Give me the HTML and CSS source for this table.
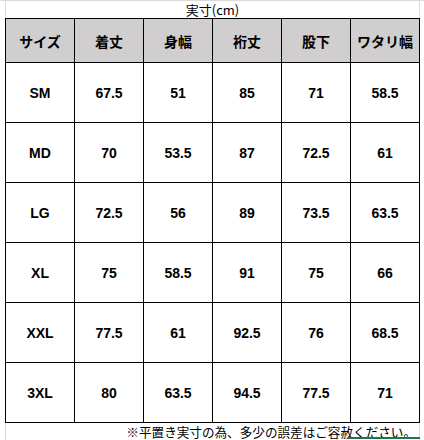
FILE: index.html
```html
<!DOCTYPE html>
<html lang="ja">
<head>
<meta charset="utf-8">
<link rel="stylesheet" href="styles.css">
</head>
<body>
<div class="sheet">
  <div class="title">実寸(cm)</div>
  <div class="table">
    <div class="cell head">サイズ</div>
    <div class="cell head">着丈</div>
    <div class="cell head">身幅</div>
    <div class="cell head">裄丈</div>
    <div class="cell head">股下</div>
    <div class="cell head">ワタリ幅</div>

    <div class="cell">SM</div><div class="cell">67.5</div><div class="cell">51</div><div class="cell">85</div><div class="cell">71</div><div class="cell">58.5</div>
    <div class="cell">MD</div><div class="cell">70</div><div class="cell">53.5</div><div class="cell">87</div><div class="cell">72.5</div><div class="cell">61</div>
    <div class="cell">LG</div><div class="cell">72.5</div><div class="cell">56</div><div class="cell">89</div><div class="cell">73.5</div><div class="cell">63.5</div>
    <div class="cell">XL</div><div class="cell">75</div><div class="cell">58.5</div><div class="cell">91</div><div class="cell">75</div><div class="cell">66</div>
    <div class="cell">XXL</div><div class="cell">77.5</div><div class="cell">61</div><div class="cell">92.5</div><div class="cell">76</div><div class="cell">68.5</div>
    <div class="cell">3XL</div><div class="cell">80</div><div class="cell">63.5</div><div class="cell">94.5</div><div class="cell">77.5</div><div class="cell">71</div>
  </div>
  <div class="note">※平置き実寸の為、多少の誤差はご容赦ください。</div>
  <div class="sel"></div>
</div>
</body>
</html>
```
FILE: styles.css
```css
html, body {
  margin: 0;
  padding: 0;
  background: #fff;
}
.sheet {
  position: relative;
  width: 424px;
  height: 440px;
  border-top: 1px solid #dadada;
  box-sizing: border-box;
  font-family: "Liberation Sans", "Noto Sans CJK JP", sans-serif;
  color: #000;
}
.title {
  height: 17px;
  margin-left: 5px;
  width: 415px;
  text-align: center;
  font-family: "Noto Sans CJK JP", sans-serif;
  font-size: 13px;
  line-height: 17px;
  border-left: 1px solid #dadada;
  border-right: 1px solid #dadada;
  box-sizing: border-box;
}
.table {
  margin-left: 5px;
  display: grid;
  grid-template-columns: repeat(6, 69px);
  grid-template-rows: 44px repeat(6, 60px);
  border-left: 1px solid #000;
  border-top: 1px solid #000;
  width: 415px;
  box-sizing: border-box;
}
.cell {
  border-right: 1px solid #000;
  border-bottom: 1px solid #000;
  display: flex;
  align-items: center;
  justify-content: center;
  font-size: 14px;
  font-weight: bold;
  padding-top: 1px;
  box-sizing: border-box;
}
.head {
  background: #d0cece;
  font-family: "Noto Sans CJK JP", sans-serif;
  font-size: 14px;
  font-weight: bold;
  padding-top: 0;
}
.note {
  margin-left: 5px;
  width: 415px;
  height: 17px;
  text-align: right;
  padding-right: 3px;
  box-sizing: border-box;
  font-family: "Noto Sans CJK JP", sans-serif;
  font-size: 12.6px;
  line-height: 17px;
  border-left: 1px solid #dadada;
  border-right: 1px solid #dadada;
}
.sel {
  position: absolute;
  left: 348px;
  top: 436px;
  width: 72px;
  height: 2px;
  background: #217346;
}
```
